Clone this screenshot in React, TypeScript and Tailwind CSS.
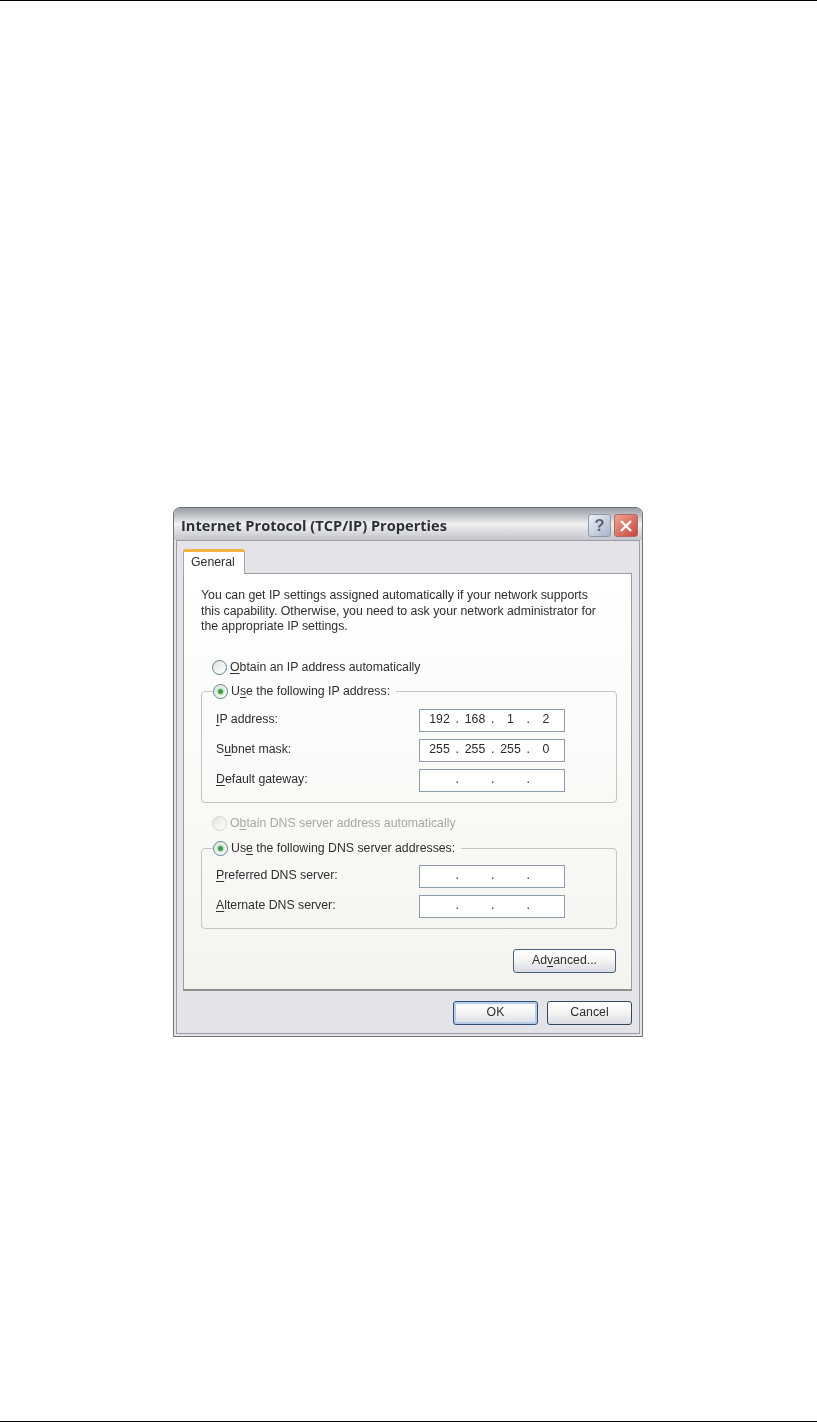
import type { ReactNode } from "react";

function Key({ children }: { children: ReactNode }) {
  return <span className="underline decoration-1 underline-offset-2">{children}</span>;
}

function Radio({ checked, disabled }: { checked?: boolean; disabled?: boolean }) {
  return (
    <span
      className={`flex h-[15px] w-[15px] shrink-0 items-center justify-center rounded-full border bg-gradient-to-br from-[#e4e4de] to-white ${
        disabled ? "border-[#d4d5d1]" : "border-[#5f8296]"
      }`}
    >
      {checked && <span className="h-[5px] w-[5px] rounded-full bg-[#3f9c4e] shadow-[0_0_2px_1px_#a9dcb0]" />}
    </span>
  );
}

function RadioRow({ checked, disabled, children }: { checked?: boolean; disabled?: boolean; children: ReactNode }) {
  return (
    <div className={`flex h-4 items-center gap-[3px] ${disabled ? "text-[#a8a8a4]" : ""}`}>
      <Radio checked={checked} disabled={disabled} />
      <span>{children}</span>
    </div>
  );
}

function IpField({ parts }: { parts: string[] }) {
  return (
    <div className="flex h-[23px] w-[146px] items-center border border-[#8c9db0] bg-white pl-[5px] text-[#2a2a2a]">
      {parts.map((part, i) => (
        <div key={i} className="flex items-center">
          <span className="w-[29px] text-center">{part}</span>
          {i < 3 && <span className="w-[6.5px] text-center">.</span>}
        </div>
      ))}
    </div>
  );
}

function FieldRow({ label, parts }: { label: ReactNode; parts: string[] }) {
  return (
    <div className="flex items-center justify-between">
      <span>{label}</span>
      <IpField parts={parts} />
    </div>
  );
}

function XpButton({ className, children }: { className: string; children: ReactNode }) {
  return (
    <button className={`flex h-6 items-center justify-center rounded-[3px] border bg-gradient-to-b from-white via-[#f4f4f2] to-[#d9dbe6] ${className}`}>
      {children}
    </button>
  );
}

const EMPTY = ["", "", "", ""];

export default function App() {
  return (
    <div className="flex h-[1422px] flex-col justify-between bg-white font-['Liberation_Sans',sans-serif] text-[12.3px] leading-[15.5px] text-[#2f2f2f]">
      <div className="h-px bg-black" />

      <div className="mb-auto ml-[173px] mt-[506px] w-[470px] rounded-t-[7px] border border-[#6f737e] bg-[#e3e3e8] blur-[0.5px]">
        {/* title bar */}
        <div className="flex h-[32px] items-center justify-between rounded-t-[6px] bg-gradient-to-b from-[#9a9ca5] via-[#f1f1f3] to-[#c3c5cc] pl-[7px] pr-[4px] pt-[3px]">
          <span className="font-['Open_Sans',sans-serif] text-[14.6px] font-bold text-[#2c3038]">
            Internet Protocol (TCP/IP) Properties
          </span>
          <div className="flex gap-[3px]">
            <div className="flex h-[23px] w-[23px] items-center justify-center rounded-[3px] border border-[#8d99ae] bg-gradient-to-br from-[#eef1f7] to-[#a9b4c9] text-[17px] font-bold text-[#5a6575]">
              ?
            </div>
            <div className="flex h-[23px] w-[24px] items-center justify-center rounded-[3px] border border-[#b06a66] bg-gradient-to-br from-[#eba393] to-[#c9433a]">
              <svg width="14" height="14" viewBox="0 0 14 14">
                <path d="M2 2 L12 12 M12 2 L2 12" stroke="#fff" strokeWidth="2.4" />
              </svg>
            </div>
          </div>
        </div>

        {/* client area */}
        <div className="mx-[2px] mb-[2px] border border-[#9a9da8] px-[6px] pb-[8px] pt-[8px]">
          <div className="relative z-10 -mb-px flex h-[25px] w-[62px] items-center rounded-t-[3px] border-x border-[#a5a8a8] border-t-[3px] border-t-[#f0b340] bg-white pb-[1px] pl-[7px]">
            General
          </div>

          <div className="mr-[1px] border border-b-2 border-[#9b9d9c] border-b-[#8d8f8e] bg-gradient-to-b from-white to-[#f4f4ef] pb-[16px] pl-[17px] pr-[14px] pt-[14px]">
            <p>
              You can get IP settings assigned automatically if your network supports
              <br />
              this capability. Otherwise, you need to ask your network administrator for
              <br />
              the appropriate IP settings.
            </p>

            <div className="ml-[11px] mt-[25px]">
              <RadioRow>
                <Key>O</Key>btain an IP address automatically
              </RadioRow>
            </div>

            <fieldset className="mt-[8px] rounded-[4px] border border-[#c6c6c0] px-[14px] pb-[10px]">
              <legend className="-ml-[3px] pr-[6px]">
                <RadioRow checked>
                  U<Key>s</Key>e the following IP address:
                </RadioRow>
              </legend>
              <div className="mr-[37px] mt-[9px] flex flex-col gap-[7px]">
                <FieldRow label={<><Key>I</Key>P address:</>} parts={["192", "168", "1", "2"]} />
                <FieldRow label={<>S<Key>u</Key>bnet mask:</>} parts={["255", "255", "255", "0"]} />
                <FieldRow label={<><Key>D</Key>efault gateway:</>} parts={EMPTY} />
              </div>
            </fieldset>

            <div className="ml-[11px] mt-[13px]">
              <RadioRow disabled>
                O<Key>b</Key>tain DNS server address automatically
              </RadioRow>
            </div>

            <fieldset className="mt-[9px] rounded-[4px] border border-[#c6c6c0] px-[14px] pb-[10px]">
              <legend className="-ml-[3px] pr-[6px]">
                <RadioRow checked>
                  Us<Key>e</Key> the following DNS server addresses:
                </RadioRow>
              </legend>
              <div className="mr-[37px] mt-[8px] flex flex-col gap-[7px]">
                <FieldRow label={<><Key>P</Key>referred DNS server:</>} parts={EMPTY} />
                <FieldRow label={<><Key>A</Key>lternate DNS server:</>} parts={EMPTY} />
              </div>
            </fieldset>

            <div className="mr-px mt-[20px] flex justify-end">
              <XpButton className="w-[103px] border-[#4a6078]">
                <span>
                  Ad<Key>v</Key>anced...
                </span>
              </XpButton>
            </div>
          </div>

          <div className="mt-[10px] flex justify-end gap-[9px] pr-[1px]">
            <XpButton className="w-[85px] border-[#2f4f78] shadow-[inset_0_0_0_2px_#b5cdea]">OK</XpButton>
            <XpButton className="w-[85px] border-[#2f4a60]">Cancel</XpButton>
          </div>
        </div>
      </div>

      <div className="h-px bg-black" />
    </div>
  );
}
